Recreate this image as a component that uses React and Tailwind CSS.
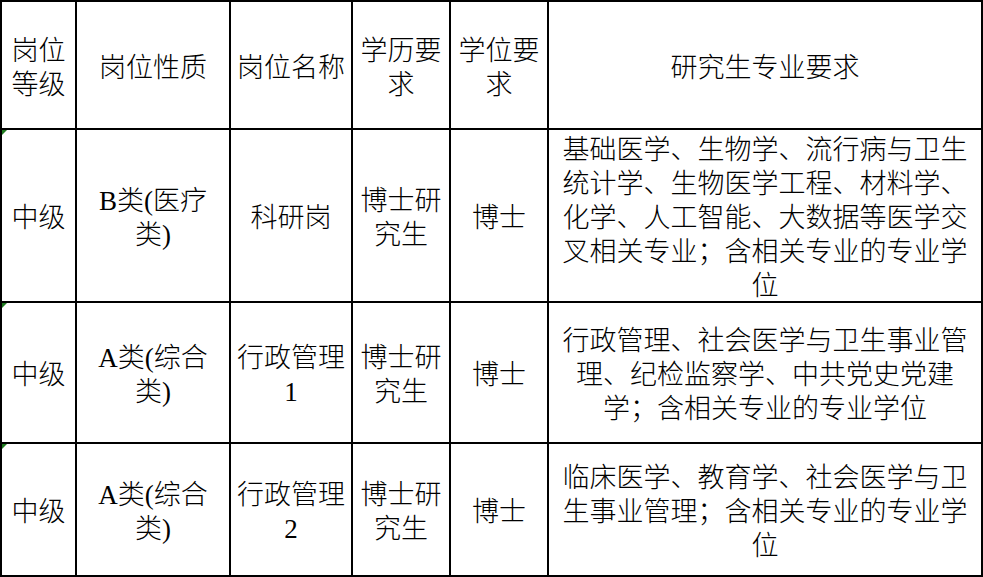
import React from "react";

function Cell({ children, marker = false }) {
  return (
    <div className="relative bg-white flex items-center justify-center text-center text-black text-[27px] leading-[34px] font-light">
      {marker && (
        <div className="absolute left-0 top-0 w-0 h-0 border-t-[5px] border-t-[#1f7a1f] border-r-[5px] border-r-transparent" />
      )}
      <div className="pt-[5px]">{children}</div>
    </div>
  );
}

function L({ children }) {
  return <span className="font-normal">{children}</span>;
}

export default function App() {
  return (
    <div className="w-[983px] h-[577px] bg-white">
      <div className="w-[983px] h-[577px] grid grid-cols-[73px_152px_120px_96px_96px_432px] grid-rows-[126px_171px_139px_131px] gap-[2px] p-[2px] bg-black font-['Liberation_Serif','Noto_Sans_CJK_SC',serif]">
        {/* header */}
        <Cell>
          岗位
          <br />
          等级
        </Cell>
        <Cell>岗位性质</Cell>
        <Cell>岗位名称</Cell>
        <Cell>
          学历要
          <br />
          求
        </Cell>
        <Cell>
          学位要
          <br />
          求
        </Cell>
        <Cell>研究生专业要求</Cell>

        {/* row 1 */}
        <Cell marker>中级</Cell>
        <Cell>
          <L>B</L>类<L>(</L>医疗
          <br />
          类<L>)</L>
        </Cell>
        <Cell>科研岗</Cell>
        <Cell>
          博士研
          <br />
          究生
        </Cell>
        <Cell>博士</Cell>
        <Cell>
          基础医学、生物学、流行病与卫生
          <br />
          统计学、生物医学工程、材料学、
          <br />
          化学、人工智能、大数据等医学交
          <br />
          叉相关专业；含相关专业的专业学
          <br />
          位
        </Cell>

        {/* row 2 */}
        <Cell marker>中级</Cell>
        <Cell>
          <L>A</L>类<L>(</L>综合
          <br />
          类<L>)</L>
        </Cell>
        <Cell>
          行政管理
          <br />
          <L>1</L>
        </Cell>
        <Cell>
          博士研
          <br />
          究生
        </Cell>
        <Cell>博士</Cell>
        <Cell>
          行政管理、社会医学与卫生事业管
          <br />
          理、纪检监察学、中共党史党建
          <br />
          学；含相关专业的专业学位
        </Cell>

        {/* row 3 */}
        <Cell marker>中级</Cell>
        <Cell>
          <L>A</L>类<L>(</L>综合
          <br />
          类<L>)</L>
        </Cell>
        <Cell>
          行政管理
          <br />
          <L>2</L>
        </Cell>
        <Cell>
          博士研
          <br />
          究生
        </Cell>
        <Cell>博士</Cell>
        <Cell>
          临床医学、教育学、社会医学与卫
          <br />
          生事业管理；含相关专业的专业学
          <br />
          位
        </Cell>
      </div>
    </div>
  );
}
